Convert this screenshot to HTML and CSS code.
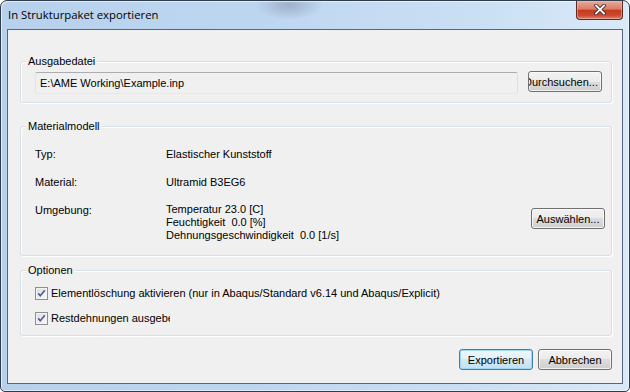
FILE: index.html
```html
<!DOCTYPE html>
<html lang="de">

<head>
    <meta charset="UTF-8">
    <title>In Strukturpaket exportieren</title>
    <link rel="stylesheet" href="styles.css">
</head>

<body>
    <div class="window">
        <div class="titlebar">
            <span class="title">In Strukturpaket exportieren</span>
            <button class="close" title="Schließen">
                <svg width="12" height="11" viewBox="0 0 12 11">
                    <path d="M2 1.5 L10 9.5 M10 1.5 L2 9.5" stroke="#3b2a2a" stroke-width="3.6" stroke-linecap="square" fill="none"/>
                    <path d="M2 1.5 L10 9.5 M10 1.5 L2 9.5" stroke="#fff" stroke-width="1.8" stroke-linecap="square" fill="none"/>
                </svg>
            </button>
        </div>

        <div class="client">
            <div class="group group-file">
                <div class="group-title">Ausgabedatei</div>
                <div class="file-row">
                    <div class="file-field">E:\AME Working\Example.inp</div>
                    <button class="btn btn-browse"><span>Durchsuchen...</span></button>
                </div>
            </div>

            <div class="group group-material">
                <div class="group-title">Materialmodell</div>
                <div class="prop-row">
                    <span class="prop-label">Typ:</span>
                    <span class="prop-value">Elastischer Kunststoff</span>
                </div>
                <div class="prop-row">
                    <span class="prop-label">Material:</span>
                    <span class="prop-value">Ultramid B3EG6</span>
                </div>
                <div class="prop-row">
                    <span class="prop-label">Umgebung:</span>
                    <div class="prop-value env">
                        <div class="env-line">Temperatur 23.0 [C]</div>
                        <div class="env-line">Feuchtigkeit  0.0 [%]</div>
                        <div class="env-line">Dehnungsgeschwindigkeit  0.0 [1/s]</div>
                    </div>
                    <button class="btn btn-select">Auswählen...</button>
                </div>
            </div>

            <div class="group group-options">
                <div class="group-title">Optionen</div>
                <label class="check">
                    <span class="box"><svg width="11" height="11" viewBox="0 0 11 11"><path d="M2.2 5.4 L4.3 7.8 L8.8 2.2" stroke="#4a6196" stroke-width="1.7" fill="none"/></svg></span>
                    <span>Elementlöschung aktivieren (nur in Abaqus/Standard v6.14 und Abaqus/Explicit)</span>
                </label>
                <label class="check">
                    <span class="box"><svg width="11" height="11" viewBox="0 0 11 11"><path d="M2.2 5.4 L4.3 7.8 L8.8 2.2" stroke="#4a6196" stroke-width="1.7" fill="none"/></svg></span>
                    <span class="clipped">Restdehnungen ausgeben</span>
                </label>
            </div>

            <div class="actions">
                <button class="btn btn-default">Exportieren</button>
                <button class="btn">Abbrechen</button>
            </div>
        </div>
    </div>
</body>
</html>
```

FILE: styles.css
```css
* {
    margin: 0;
    padding: 0;
    box-sizing: border-box;
}

body {
    width: 630px;
    height: 392px;
    overflow: hidden;
    background: #fff;
    font-family: "Liberation Sans", Arial, sans-serif;
    font-size: 11px;
    color: #000;
}

/* window frame */
.window {
    height: 392px;
    border: 1px solid #2f3c4c;
    border-radius: 7px 7px 5px 5px;
    padding: 0 6px 7px 6px;
    display: flex;
    flex-direction: column;
    background:
        radial-gradient(ellipse 34px 15px at 288px 4px, rgba(95, 105, 125, 0.35), rgba(95, 105, 125, 0) 100%),
        linear-gradient(90deg, #b7d1ed 0%, #bdd6f0 40%, #cadff4 75%, #d9e9f8 100%);
    box-shadow: inset 1px 1px 0 rgba(255, 255, 255, 0.6), inset -1px -1px 0 rgba(255, 255, 255, 0.5);
}

.titlebar {
    height: 28px;
    flex-shrink: 0;
    display: flex;
    align-items: flex-start;
}

.title {
    flex: 1;
    padding: 6px 0 0 1px;
    font-family: "Open Sans", "Noto Sans", sans-serif;
    font-size: 11.3px;
    line-height: 16px;
    color: #000;
}

.close {
    width: 47px;
    height: 19px;
    border: 1px solid #5b2a23;
    border-top: none;
    border-radius: 0 0 4px 4px;
    background: linear-gradient(#e8ab9c 0%, #d97c66 45%, #c8391e 52%, #c94a2f 80%, #df8571 100%);
    box-shadow: inset 0 0 0 1px rgba(255, 200, 190, 0.45);
    display: flex;
    align-items: center;
    justify-content: center;
    padding-bottom: 1px;
}

/* dialog body */
.client {
    flex: 1;
    border: 1px solid #55677e;
    background: #f0f0f0;
    padding: 31px 10px 0 12px;
    display: flex;
    flex-direction: column;
}

.group {
    border: 1px solid #d5dfe5;
    border-radius: 3px;
    box-shadow: inset 1px 1px 0 #fff, 1px 1px 0 #fff;
    padding: 0 9px 8px 14px;
}

.group-title {
    width: fit-content;
    margin: -8px 0 0 -9px;
    padding: 0 2px;
    line-height: 14px;
    background: #f0f0f0;
}

.file-row {
    display: flex;
    align-items: flex-start;
    gap: 10px;
}

.file-field {
    flex: 1;
    height: 22px;
    margin-top: 4px;
    border: 1px solid;
    border-color: #abadb3 #dbdfe6 #e3e9ef #e2e3ea;
    border-radius: 2px;
    padding: 0 4px;
    line-height: 20px;
    white-space: nowrap;
}

.btn {
    width: 74px;
    height: 21px;
    flex-shrink: 0;
    border: 1px solid #707070;
    border-radius: 3px;
    background: linear-gradient(#f2f2f2 0%, #ebebeb 50%, #dddddd 50%, #cfcfcf 100%);
    box-shadow: inset 0 0 0 1px rgba(255, 255, 255, 0.7);
    font: inherit;
    color: #000;
    white-space: nowrap;
}

.btn-browse {
    margin-top: 3px;
    overflow: hidden;
    text-align: left;
}

.btn-browse span {
    display: inline-block;
    margin-left: -5px;
}

.group-material {
    margin-top: 23px;
    padding-bottom: 13px;
}

.prop-row {
    display: flex;
    align-items: flex-start;
    margin-top: 14px;
    line-height: 14px;
}

.prop-label {
    width: 131px;
    flex-shrink: 0;
}

.prop-value {
    flex: 1;
}

.env {
    line-height: 13px;
}

.env-line {
    white-space: pre;
}

.btn-select {
    margin: 5px -3px 0 0;
}

.group-options {
    margin-top: 14px;
    padding-bottom: 10px;
}

.check {
    display: flex;
    align-items: center;
    height: 13px;
    margin-top: 10px;
    line-height: 13px;
    white-space: nowrap;
}

.check + .check {
    margin-top: 12px;
}

.box {
    width: 13px;
    height: 13px;
    margin-right: 3px;
    border: 1px solid #8e8f8f;
    background: linear-gradient(135deg, #dcdcdc, #fbfbfb);
    box-shadow: inset 0 0 0 1px #f4f4f4;
    display: flex;
    align-items: center;
    justify-content: center;
}

.clipped {
    width: 119px;
    overflow: hidden;
}

.actions {
    margin-top: 13px;
    display: flex;
    justify-content: flex-end;
    gap: 5px;
}

.btn-default {
    border-color: #3c7fb1;
    background: linear-gradient(#eef7fd 0%, #e1f0fa 50%, #d2e9f7 50%, #c4e0f3 100%);
    box-shadow: inset 0 0 0 1px #9fd4f4;
}
```
